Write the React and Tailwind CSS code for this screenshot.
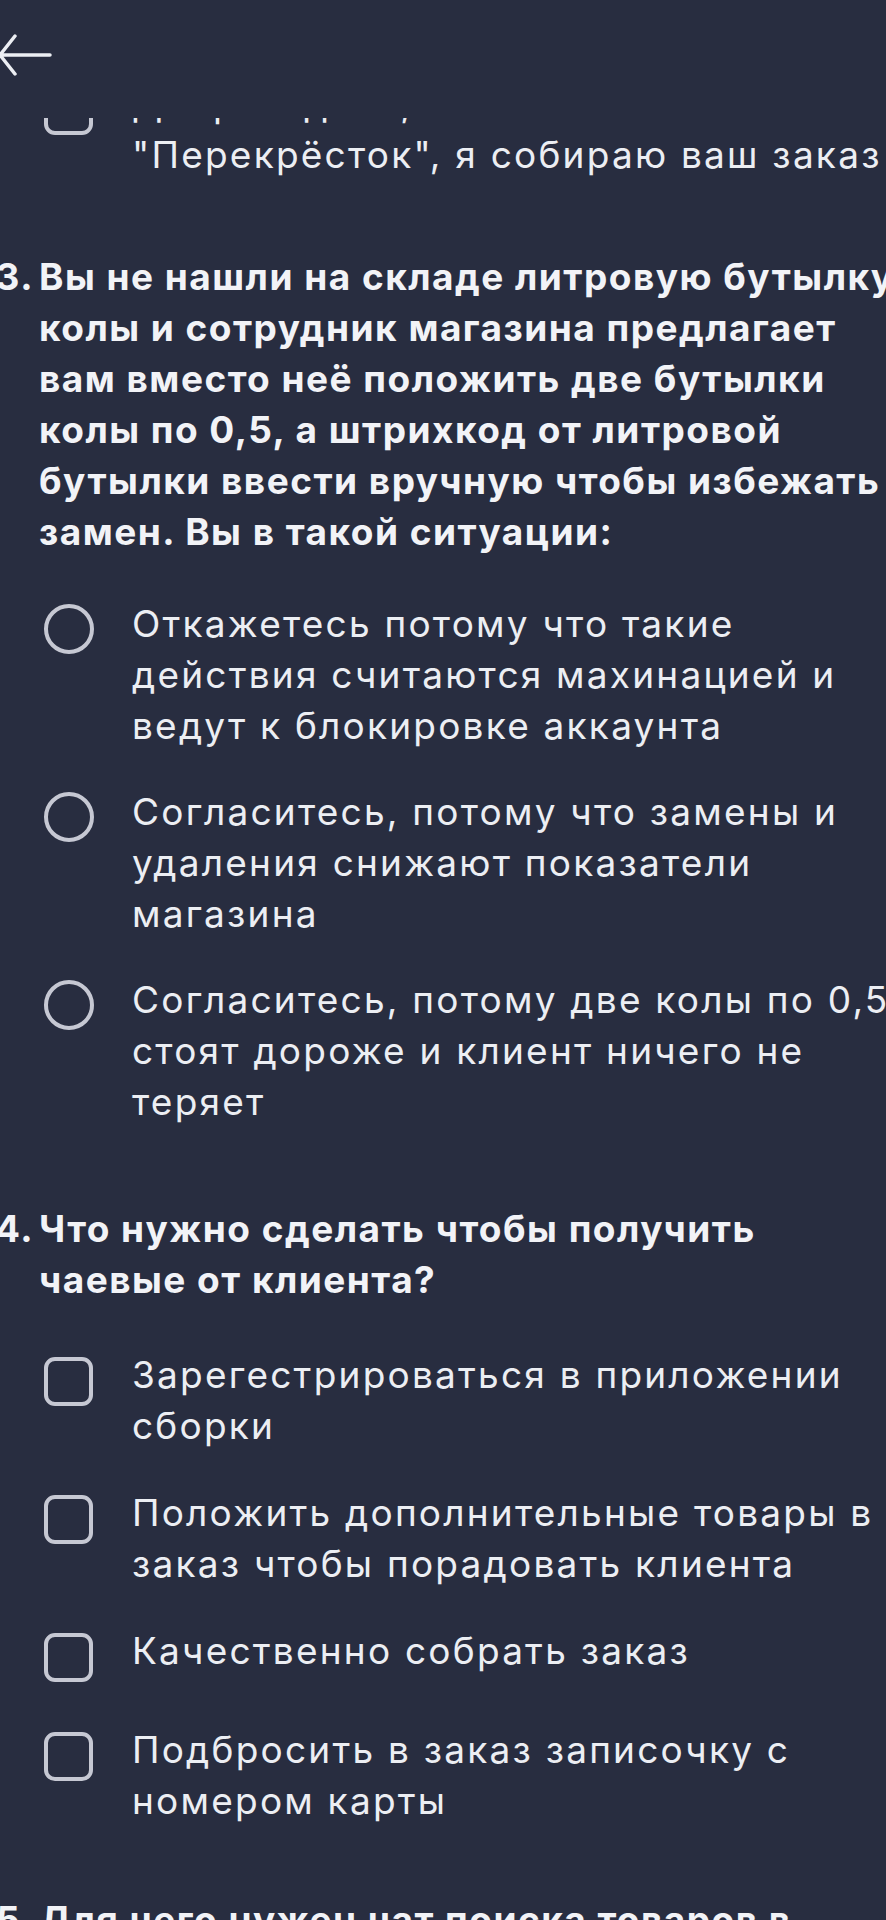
const questions = [
  {
    n: 3,
    type: 'radio',
    space: 'mt-0',
    title: [
      'Вы не нашли на складе литровую бутылку',
      'колы и сотрудник магазина предлагает',
      'вам вместо неё положить две бутылки',
      'колы по 0,5, а штрихкод от литровой',
      'бутылки ввести вручную чтобы избежать',
      'замен. Вы в такой ситуации:',
    ],
    options: [
      ['Откажетесь потому что такие', 'действия считаются махинацией и', 'ведут к блокировке аккаунта'],
      ['Согласитесь, потому что замены и', 'удаления снижают показатели', 'магазина'],
      ['Согласитесь, потому две колы по 0,5', 'стоят дороже и клиент ничего не', 'теряет'],
    ],
  },
  {
    n: 4,
    type: 'checkbox',
    space: 'mt-[5px]',
    title: ['Что нужно сделать чтобы получить', 'чаевые от клиента?'],
    options: [
      ['Зарегестрироваться в приложении', 'сборки'],
      ['Положить дополнительные товары в', 'заказ чтобы порадовать клиента'],
      ['Качественно собрать заказ'],
      ['Подбросить в заказ записочку с', 'номером карты'],
    ],
  },
  {
    n: 5,
    type: 'checkbox',
    space: '-mt-[3px]',
    title: ['Для чего нужен чат поиска товаров в', 'магазине?'],
    options: [],
  },
];

const Lines = ({ lines }) => (
  <div className="whitespace-nowrap">
    {lines.map((l, i) => (
      <div key={i}>{l}</div>
    ))}
  </div>
);

const Indicator = ({ type }) =>
  type === 'radio' ? (
    <div className="mt-[6px] ml-[2px] w-[50px] h-[50px] rounded-full border-[4px] border-[#c6c8d3]" />
  ) : (
    <div className="mt-[8px] ml-[2px] w-[49px] h-[49px] rounded-[11px] border-[4px] border-[#c6c8d3]" />
  );

const Option = ({ type, lines }) => (
  <div className="flex min-h-[63px] text-[37px] leading-[51px] tracking-[0.06em] text-[#eceef3]">
    <div className="w-[90px] shrink-0">
      <Indicator type={type} />
    </div>
    <Lines lines={lines} />
  </div>
);

const Question = ({ q }) => (
  <div className={q.space}>
    <div className="flex -ml-[56px] text-[37px] leading-[51px] font-bold tracking-[0.04em] text-[#f2f3f7]">
      <div className="w-[53px] shrink-0 pr-[5px] text-right">{q.n}.</div>
      <Lines lines={q.title} />
    </div>
    {q.options.length > 0 && (
      <div
        className={`flex flex-col ${
          q.type === 'radio' ? 'mt-[41px] gap-[35px]' : 'mt-[44px] gap-[36px]'
        }`}
      >
        {q.options.map((o, i) => (
          <Option key={i} type={q.type} lines={o} />
        ))}
      </div>
    )}
  </div>
);

export default function App() {
  return (
    <div className="w-[886px] h-[1920px] overflow-hidden bg-[#282d40] font-['Inter','Noto_Sans',sans-serif]">
      <header className="h-[118px] pt-[33px]">
        <svg className="-ml-[10px]" width="64" height="44" viewBox="0 0 64 44" fill="none">
          <path d="M10 22H60M10 22L25 3M10 22L25 41" stroke="#eceef3" strokeWidth="3.5" strokeLinecap="round" strokeLinejoin="round" />
        </svg>
      </header>
      <div className="h-[1802px] overflow-hidden">
        <div className="-mt-[40px] pl-[42px] flex flex-col gap-[71px]">
          <Option type="checkbox" lines={['Добрый день, я из', '"Перекрёсток", я собираю ваш заказ']} />
          {questions.map((q) => (
            <Question key={q.n} q={q} />
          ))}
        </div>
      </div>
    </div>
  );
}
